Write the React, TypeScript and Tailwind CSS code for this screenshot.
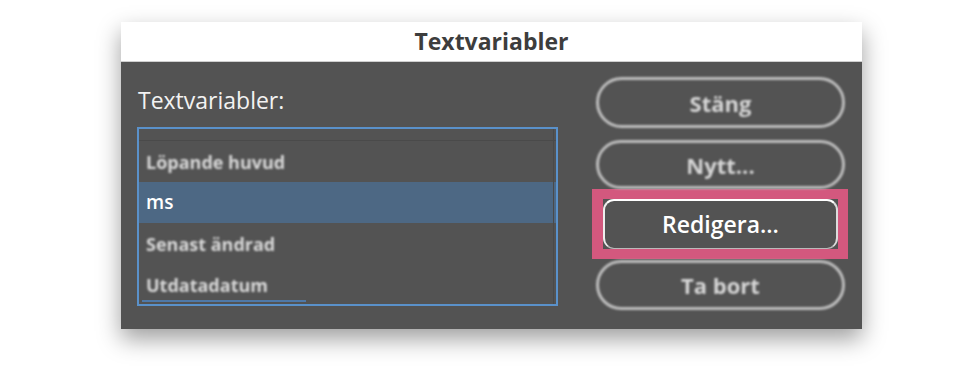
import React from "react";

const font = { fontFamily: '"Open Sans", "Noto Sans", "DejaVu Sans", sans-serif' };

function PillButton({ label, h }: { label: string; h: string }) {
  return (
    <div
      className={`${h} w-full rounded-full border-[3px] border-[#bdbdbd] flex items-center justify-center blur-[0.8px]`}
    >
      <span className="text-[22px] font-bold text-[#d6d6d6] leading-none">{label}</span>
    </div>
  );
}

export default function App() {
  const rows = ["Löpande huvud", "ms", "Senast ändrad", "Utdatadatum"];
  return (
    <div className="w-[962px] h-[370px] bg-white relative overflow-hidden" style={font}>
      <div className="absolute left-[121px] top-[22px] w-[741px] h-[307px] flex flex-col shadow-[0_10px_22px_rgba(0,0,0,0.38)]">
        {/* title bar */}
        <div className="h-[40px] bg-white border-b border-[#cfcfcf] flex items-center justify-center">
          <span className="text-[23px] font-bold text-[#3d3d3d] leading-none">Textvariabler</span>
        </div>
        {/* panel */}
        <div className="flex-1 bg-[#535353] flex pl-[16px] pr-[17px]">
          <div className="w-[421px] flex flex-col pt-[23px]">
            <div className="text-[23px] leading-[30px] text-[#f2f2f2] pl-[1px]">Textvariabler:</div>
            <div className="mt-[12px] h-[179px] border-2 border-[#5a91ca] overflow-hidden relative flex flex-col">
              <div className="h-[12px] shrink-0 border-b border-[#4a4a4a]" />
              {rows.map((r) => {
                const sel = r === "ms";
                return (
                  <div
                    key={r}
                    className={`h-[41px] shrink-0 flex items-center pl-[7px] ${sel ? "bg-[#4d6884]" : ""}`}
                  >
                    {sel ? (
                      <span className="text-[19px] text-white font-semibold leading-none">{r}</span>
                    ) : (
                      <span className="text-[18px] font-bold text-[#d9d9d9] leading-none blur-[1px]">{r}</span>
                    )}
                  </div>
                );
              })}
              <div className="absolute left-[3px] bottom-[2px] w-[164px] h-[2px] bg-[#4f79a8]" />
              <div className="absolute right-[2px] top-0 bottom-0 w-[1px] bg-[#4a4a4a]" />
            </div>
          </div>
          <div className="ml-[38px] w-[249px] flex flex-col pt-[15px]">
            <PillButton label="Stäng" h="h-[51px]" />
            <div className="mt-[12px]">
              <PillButton label="Nytt..." h="h-[49px]" />
            </div>
            <div className="-ml-[4px] -mr-[3px] h-[70px] border-[10px] border-l-[11px] border-[#d3587e] flex">
              <div className="flex-1 rounded-[11px] border-t-2 border-l-2 border-r-2 border-b border-t-white border-l-white/90 border-r-white/80 border-b-white/60 flex items-center justify-center">
                <span className="text-[23px] font-semibold text-white leading-none">Redigera...</span>
              </div>
            </div>
            <div className="mt-[1px]">
              <PillButton label="Ta bort" h="h-[50px]" />
            </div>
          </div>
        </div>
      </div>
    </div>
  );
}
